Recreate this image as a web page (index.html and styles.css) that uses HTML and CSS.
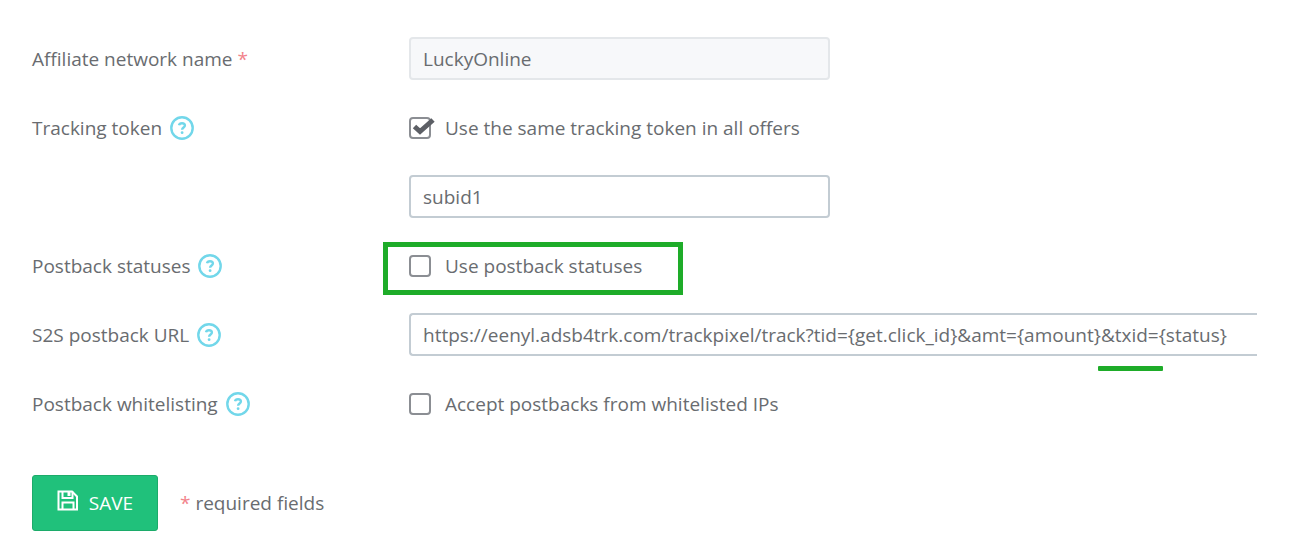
FILE: index.html
```
<!DOCTYPE html>
<html lang="en">
<head>
	<meta charset="UTF-8">
	<title>Affiliate network</title>
	<link rel="stylesheet" href="styles.css">
</head>
<body>
	<svg class="sprite" aria-hidden="true">
		<symbol id="help" viewBox="0 0 24 24">
			<circle cx="12" cy="12" r="10.7" fill="none" stroke="currentColor" stroke-width="2.4"/>
			<path d="M9 9.200C9.300 7.800 10.500 7.200 12 7.200c1.700 0 2.900.9 2.900 2.300 0 1.900-2.800 2.100-2.800 4.200" fill="none" stroke="currentColor" stroke-width="2.400"/>
			<circle cx="12.100" cy="16.700" r="1.400" fill="currentColor"/>
		</symbol>
	</svg>
	<form class="form" action="">
		<div class="row">
			<label class="name" for="network">Affiliate network name <span class="star">*</span></label>
			<div class="field">
				<input type="text" class="ipt" id="network" value="LuckyOnline" disabled>
			</div>
		</div>
		<div class="row">
			<div class="name">Tracking token <svg class="help"><use href="#help"/></svg></div>
			<div class="field">
				<label class="check">
					<input type="checkbox" checked>
					<svg class="tick" viewBox="0 0 26 24"><path d="M5.500 10.500l5.500 5L24 4" fill="none" stroke="currentColor" stroke-width="5"/></svg>
					Use the same tracking token in all offers
				</label>
			</div>
		</div>
		<div class="row">
			<div class="name"></div>
			<div class="field">
				<input type="text" class="ipt" value="subid1" aria-label="Tracking token">
			</div>
		</div>
		<div class="row">
			<div class="name">Postback statuses <svg class="help"><use href="#help"/></svg></div>
			<div class="field">
				<label class="check marked">
					<input type="checkbox">
					Use postback statuses
				</label>
			</div>
		</div>
		<div class="row">
			<label class="name" for="url">S2S postback URL <svg class="help"><use href="#help"/></svg></label>
			<div class="field underlined">
				<input type="text" class="ipt url" id="url" value="https://eenyl.adsb4trk.com/trackpixel/track?tid={get.click_id}&amp;amt={amount}&amp;txid={status}">
			</div>
		</div>
		<div class="row">
			<div class="name">Postback whitelisting <svg class="help"><use href="#help"/></svg></div>
			<div class="field">
				<label class="check">
					<input type="checkbox">
					Accept postbacks from whitelisted IPs
				</label>
			</div>
		</div>
		<div class="footer">
			<button type="button" class="save">
				<svg class="disk" viewBox="0 0 22 22" fill="none" stroke="currentColor" stroke-width="2">
					<path d="M1.500 1.500h13.500l5 5v13h-18.500z"/>
					<path d="M5.500 1.500v6.500h10v-6.500M5.500 19.500v-7h11v7"/>
					<path d="M12 2v4" stroke-width="3"/>
				</svg>
				SAVE
			</button>
			<span><span class="star">*</span> required fields</span>
		</div>
	</form>
</body>
</html>
```

FILE: styles.css
```
body{
	margin:0;
	background:#fff;
	font-family:"Open Sans",sans-serif;
	font-size:19px;
	color:#696c70;
}
input,button{
	font:inherit;
	color:inherit;
}
.sprite{
	position:absolute;
	width:0;
	height:0;
}
.form{
	padding:37px 33px 24px 32px;
}
.row{
	display:flex;
	align-items:center;
	min-height:43px;
	margin-bottom:26px;
}
.name{
	display:flex;
	align-items:center;
	flex:none;
	width:377px;
	line-height:24px;
	white-space:pre;
}
.star{
	color:#f2838b;
}
.help{
	width:24px;
	height:24px;
	margin-left:3px;
	color:#72d7ea;
}
.field{
	position:relative;
	flex:1;
	min-width:0;
}
.ipt{
	display:block;
	box-sizing:border-box;
	width:421px;
	max-width:100%;
	height:43px;
	padding:0 12px;
	border:2px solid #c3ccd3;
	border-radius:4px;
	background:#fff;
	outline:none;
}
.ipt:disabled{
	border-color:#e4e7ea;
	background:#f7f8fa;
}
.url{
	width:100%;
	border-right:0;
	border-radius:4px 0 0 4px;
}
.check{
	position:relative;
	display:flex;
	align-items:center;
	gap:14px;
	width:fit-content;
}
.check input{
	appearance:none;
	box-sizing:border-box;
	width:22px;
	height:22px;
	margin:0;
	border:2px solid #8b8e93;
	border-radius:4px;
}
.tick{
	position:absolute;
	left:0;
	top:1px;
	width:26px;
	height:24px;
	color:#5c5f65;
}
/* green marks over the form */
.marked:after{
	position:absolute;
	top:-11px;
	right:-41px;
	bottom:-16px;
	left:-26px;
	border:5px solid #1eac29;
	content:"";
}
.underlined:after{
	position:absolute;
	top:53px;
	left:689px;
	width:65px;
	height:5px;
	border-radius:1px;
	background:#1eac29;
	content:"";
}
.footer{
	display:flex;
	align-items:center;
	gap:22px;
	margin-top:50px;
}
.save{
	display:flex;
	align-items:center;
	justify-content:center;
	gap:10px;
	width:126px;
	height:56px;
	padding:0;
	border:1px solid #1cab6a;
	border-radius:3px;
	background:#20c17b;
	color:#fff;
}
.disk{
	width:22px;
	height:22px;
	margin-bottom:4px;
}
```
